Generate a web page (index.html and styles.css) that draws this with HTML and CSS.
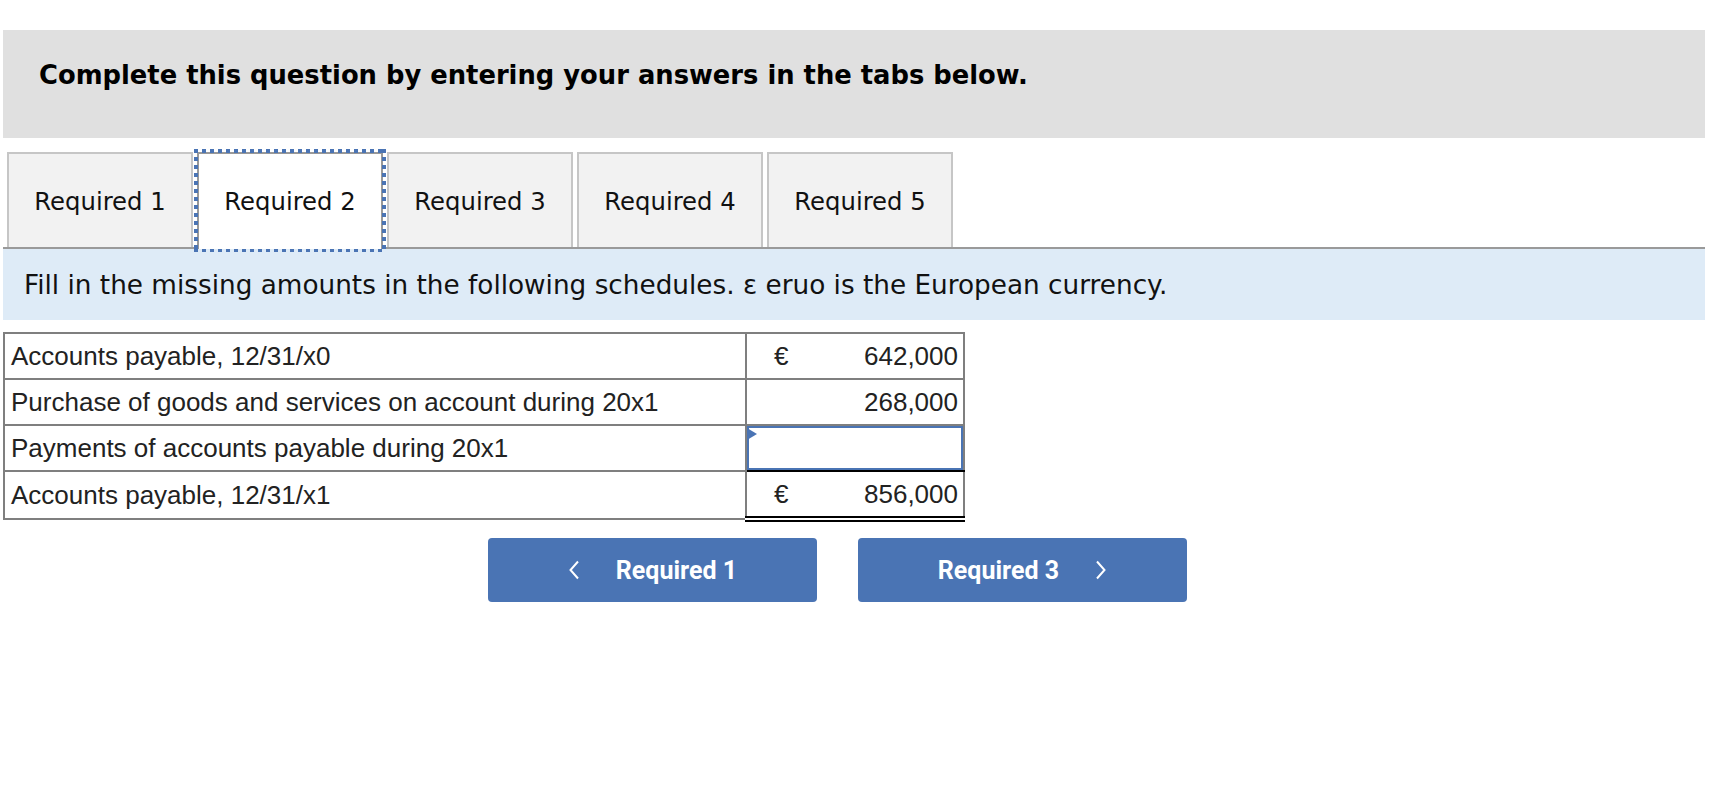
FILE: index.html
```html
<!DOCTYPE html>
<html lang="en">
<head>
<meta charset="utf-8">
<title>Required 2</title>
<link rel="stylesheet" href="styles.css">
</head>
<body>
<div class="page">
  <div class="header">
    <h1 class="title">Complete this question by entering your answers in the tabs below.</h1>
  </div>

  <div class="tabs">
    <div class="tab">Required 1</div>
    <div class="tab active">Required 2</div>
    <div class="tab">Required 3</div>
    <div class="tab">Required 4</div>
    <div class="tab">Required 5</div>
  </div>

  <div class="info">Fill in the missing amounts in the following schedules. ε eruo is the European currency.</div>

  <table class="schedule">
    <tr>
      <td class="label">Accounts payable, 12/31/x0</td>
      <td class="amt"><div class="amt-row"><span class="cur">€</span><span class="num">642,000</span></div></td>
    </tr>
    <tr>
      <td class="label">Purchase of goods and services on account during 20x1</td>
      <td class="amt"><div class="amt-row"><span class="cur"></span><span class="num">268,000</span></div></td>
    </tr>
    <tr>
      <td class="label">Payments of accounts payable during 20x1</td>
      <td class="amt input-cell"><div class="input-wrap"><input class="answer" type="text" aria-label="Payments of accounts payable during 20x1"><span class="marker"></span></div></td>
    </tr>
    <tr>
      <td class="label">Accounts payable, 12/31/x1</td>
      <td class="amt total-amt"><div class="amt-row"><span class="cur">€</span><span class="num">856,000</span></div></td>
    </tr>
  </table>

  <div class="nav">
    <button class="navbtn" type="button">
      <svg class="chev" width="12" height="20" viewBox="0 0 12 20"><path d="M10 1.5 L2.5 10 L10 18.5" fill="none" stroke="#fff" stroke-width="2"/></svg>
      <span>Required 1</span>
    </button>
    <button class="navbtn" type="button">
      <span>Required 3</span>
      <svg class="chev" width="12" height="20" viewBox="0 0 12 20"><path d="M2 1.5 L9.5 10 L2 18.5" fill="none" stroke="#fff" stroke-width="2"/></svg>
    </button>
  </div>
</div>
</body>
</html>
```

FILE: styles.css
```css
html, body {
  margin: 0;
  padding: 0;
  background: #fff;
}

.page {
  width: 1702px;
  margin-left: 3px;
  padding-top: 30px;
  font-family: "DejaVu Sans", Verdana, sans-serif;
  color: #000;
}

.header {
  height: 108px;
  box-sizing: border-box;
  background: #e0e0e0;
  padding: 30px 0 0 36px;
}

.title {
  margin: 0;
  font-size: 25.8px;
  line-height: 30px;
  font-weight: 700;
}

.tabs {
  display: flex;
  gap: 4px;
  margin-top: 14px;
  padding-left: 4px;
  border-bottom: 2px solid #9a9a9a;
}

.tab {
  width: 186px;
  height: 95px;
  box-sizing: border-box;
  border: 2px solid #c6c6c6;
  border-bottom: 0;
  background: #f2f2f2;
  display: flex;
  align-items: center;
  justify-content: center;
  font-size: 24.3px;
  padding-top: 2px;
  color: #111;
}

.tab.active {
  position: relative;
  height: 97px;
  margin-bottom: -2px;
  padding-bottom: 2px;
  background: #fff;
  border-color: #999;
}

.tab.active::before {
  content: "";
  position: absolute;
  left: -5px;
  right: -5px;
  top: -5px;
  bottom: -3px;
  pointer-events: none;
  background:
    repeating-linear-gradient(to right, #4a74b4 0 4px, transparent 4px 8px) top left / 100% 4px no-repeat,
    repeating-linear-gradient(to right, #4a74b4 0 4px, transparent 4px 8px) bottom left / 100% 3px no-repeat,
    repeating-linear-gradient(to bottom, #4a74b4 0 4px, transparent 4px 8px) top left / 4px 100% no-repeat,
    repeating-linear-gradient(to bottom, #4a74b4 0 4px, transparent 4px 8px) top right / 4px 100% no-repeat;
}

.info {
  height: 71px;
  box-sizing: border-box;
  background: #deebf7;
  padding-left: 21px;
  display: flex;
  align-items: center;
  font-size: 26.3px;
  color: #111;
}

.schedule {
  margin-top: 12px;
  border-collapse: collapse;
  font-family: "Liberation Sans", Arial, sans-serif;
  font-size: 26px;
  color: #222;
}

.schedule td {
  border: 2px solid #7f7f7f;
  height: 44px;
  padding: 0;
  vertical-align: middle;
  line-height: 30px;
}

.label {
  width: 734px;
  padding-left: 6px !important;
}

.amt {
  width: 216px;
}

.amt-row {
  display: flex;
  justify-content: space-between;
  padding: 0 5px 0 27px;
}

.input-cell {
  border-bottom-color: #000 !important;
}

.input-wrap {
  position: relative;
  height: 44px;
}

.answer {
  display: block;
  box-sizing: border-box;
  width: 100%;
  height: 44px;
  margin: 0;
  border: 2px solid #4a74b4;
  background: #fff;
  outline: none;
  font: inherit;
}

.marker {
  position: absolute;
  top: 2px;
  left: 0;
  width: 0;
  height: 0;
  border-left: 10px solid #4a74b4;
  border-top: 6px solid transparent;
  border-bottom: 6px solid transparent;
}

.total-amt {
  border-top: 2px solid #000 !important;
  border-bottom: 6px double #000 !important;
}

.nav {
  display: flex;
  gap: 41px;
  margin: 16px 0 0 485px;
}

.navbtn {
  width: 329px;
  height: 64px;
  padding: 0;
  border: 0;
  border-radius: 4px;
  background: #4a74b4;
  color: #fff;
  font-family: Roboto, "Liberation Sans", sans-serif;
  font-weight: 700;
  font-size: 25px;
  display: flex;
  align-items: center;
  justify-content: center;
  gap: 36px;
}

.chev {
  display: block;
}
```
